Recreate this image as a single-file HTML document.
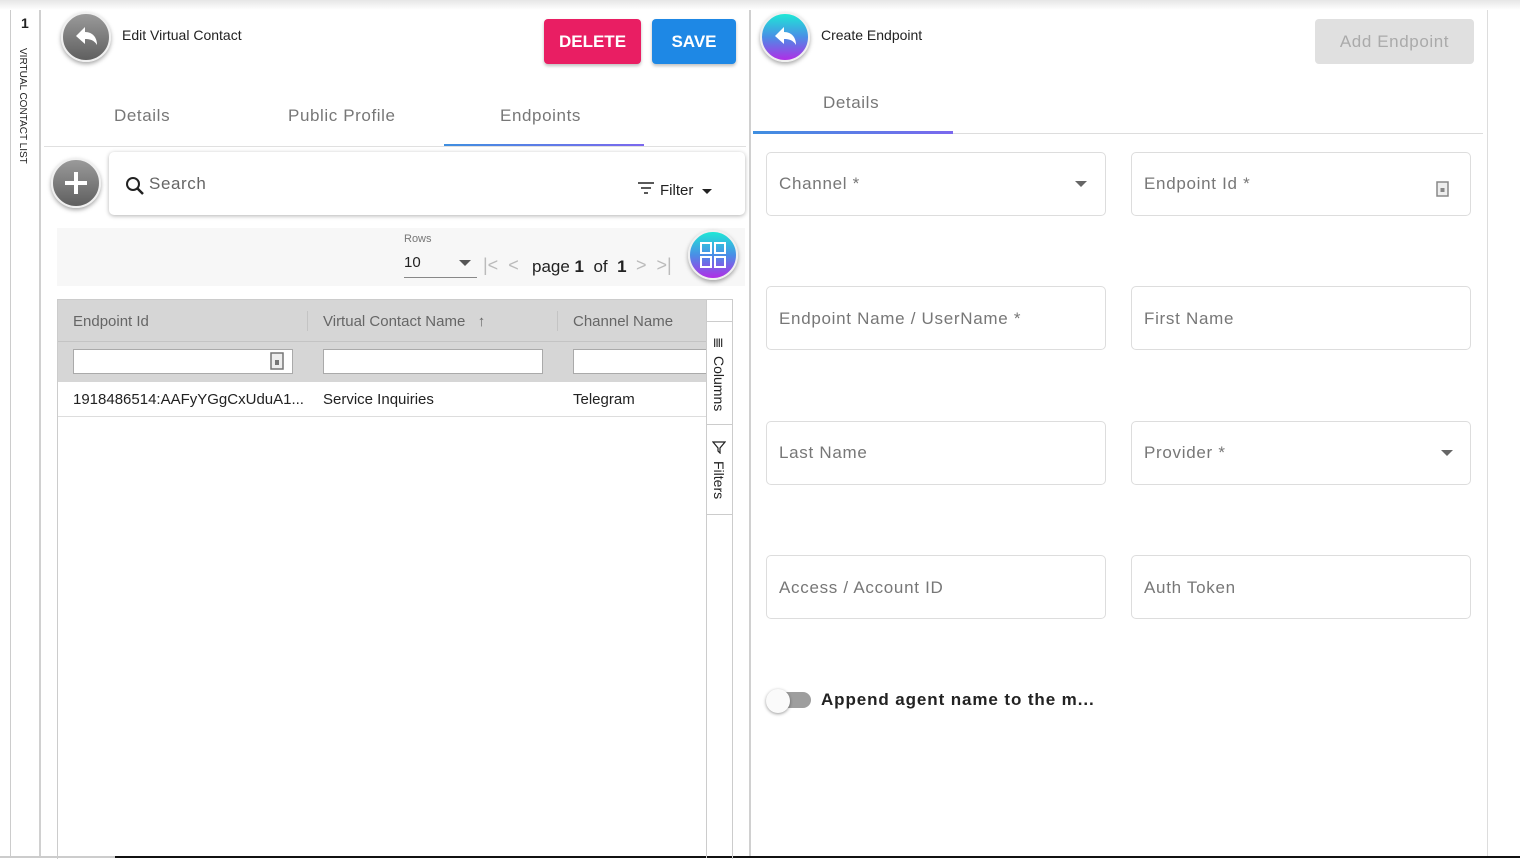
<!DOCTYPE html>
<html><head><meta charset="utf-8"><style>
*{box-sizing:border-box;margin:0;padding:0}
body{width:1520px;height:858px;overflow:hidden;background:#fff;font-family:"Liberation Sans",sans-serif;position:relative;color:#222}
.a{position:absolute}
.topsh{left:0;top:0;width:1520px;height:10px;background:linear-gradient(#e6e6e6,#fff)}
.vl{position:absolute;top:10px;bottom:0}
.circ{position:absolute;width:50px;height:50px;border-radius:50%;box-shadow:0 2px 4px rgba(0,0,0,.35);border:2px solid #f0f0f0}
.gray{background:linear-gradient(#9a9a9a,#5f5f5f)}
.grad{background:linear-gradient(#1ee8d6,#4a8ee6 50%,#b02ee6)}
.btn{position:absolute;border-radius:4px;color:#fff;font-weight:bold;font-size:17px;text-align:center;line-height:45px;box-shadow:0 2px 3px rgba(0,0,0,.25)}
.tab{position:absolute;font-size:17px;color:#777;letter-spacing:.6px}
.fld{position:absolute;width:340px;height:64px;border:1px solid #ddd;border-radius:5px;font-size:17px;color:#777;padding:21px 12px;letter-spacing:.7px}
.tri{position:absolute;width:0;height:0;border-left:6px solid transparent;border-right:6px solid transparent;border-top:6px solid #666}
.th{position:absolute;font-size:15px;color:#666;top:313px}
.fin{position:absolute;top:349px;height:25px;border:1px solid #aaa;background:#fff}
</style></head><body>
<div class="a topsh"></div>
<div class="vl" style="left:10px;width:1px;background:#ccc"></div>
<div class="vl" style="left:39px;width:2px;background:#d0d0d0"></div>
<div class="vl" style="left:749px;width:2px;background:#d0d0d0"></div>
<div class="vl" style="left:1487px;width:1px;background:#ddd"></div>
<div class="a" style="left:0;top:856px;width:115px;height:2px;background:#ccc"></div>
<div class="a" style="left:115px;top:856px;width:1405px;height:2px;background:#111"></div>
<div class="a" style="left:21px;top:15px;font-weight:bold;font-size:14px">1</div>
<div class="a" style="left:28px;top:48px;transform-origin:0 0;transform:rotate(90deg);font-size:10px;white-space:nowrap">VIRTUAL CONTACT LIST</div>

<div class="circ gray" style="left:61px;top:12px"><svg width="46" height="46" viewBox="0 0 46 46"><path d="M13 22 L22 13 V18 C30 18 34 24 34 31 C31 26 27 25 22 25 V30 Z" fill="#fff"/></svg></div>
<div class="a" style="left:122px;top:27px;font-size:14px">Edit Virtual Contact</div>
<div class="btn" style="left:544px;top:19px;width:97px;background:#e91e63">DELETE</div>
<div class="btn" style="left:652px;top:19px;width:84px;background:#1e88e5">SAVE</div>
<div class="tab" style="left:114px;top:106px">Details</div>
<div class="tab" style="left:288px;top:106px">Public Profile</div>
<div class="tab" style="left:500px;top:106px">Endpoints</div>
<div class="a" style="left:44px;top:146px;width:702px;height:1px;background:#e0e0e0"></div>
<div class="a" style="left:444px;top:144px;width:200px;height:2px;background:linear-gradient(90deg,#3f8fe0,#7b68ee)"></div>

<div class="circ gray" style="left:51px;top:158px"><svg width="46" height="46" viewBox="0 0 46 46"><path d="M23 12V34M12 23H34" stroke="#fff" stroke-width="4"/></svg></div>
<div class="a" style="left:109px;top:152px;width:636px;height:63px;border-radius:5px;box-shadow:0 1px 4px rgba(0,0,0,.3);background:#fff"></div>
<svg class="a" style="left:124px;top:175px" width="22" height="22" viewBox="0 0 22 22"><circle cx="9" cy="9" r="6" fill="none" stroke="#222" stroke-width="2"/><path d="M13 13L19 19" stroke="#222" stroke-width="2.5"/></svg>
<div class="a" style="left:149px;top:174px;font-size:17px;color:#666;letter-spacing:.6px">Search</div>
<svg class="a" style="left:637px;top:181px" width="18" height="14"><path d="M1 2H17M4 7H14M7 12H11" stroke="#222" stroke-width="1.6"/></svg>
<div class="a" style="left:660px;top:182px;font-size:15px">Filter</div>
<div class="tri" style="left:702px;top:189px;border-top-color:#222;border-width:5px 5px 0"></div>

<div class="a" style="left:57px;top:228px;width:688px;height:58px;background:#f7f7f7"></div>
<div class="a" style="left:404px;top:233px;font-size:11px;color:#777">Rows</div>
<div class="a" style="left:404px;top:254px;font-size:15px">10</div>
<div class="a" style="left:404px;top:277px;width:73px;height:1px;background:#888"></div>
<div class="tri" style="left:459px;top:260px;border-top-color:#555"></div>
<div class="a" style="left:483px;top:255px;font-size:18px;color:#bbb">|&lt;&nbsp; &lt;</div>
<div class="a" style="left:532px;top:257px;font-size:17px">page <b>1</b>&nbsp; of&nbsp; <b>1</b></div>
<div class="a" style="left:636px;top:255px;font-size:18px;color:#bbb">&gt;&nbsp; &gt;|</div>
<div class="circ grad" style="left:688px;top:230px"><svg width="46" height="46" viewBox="0 0 46 46"><g fill="none" stroke="#fff" stroke-width="2"><rect x="11" y="11" width="10" height="10"/><rect x="25" y="11" width="10" height="10"/><rect x="11" y="25" width="10" height="10"/><rect x="25" y="25" width="10" height="10"/></g></svg></div>

<div class="a" style="left:57px;top:299px;width:676px;height:560px;border:1px solid #ccc;border-bottom:none"></div>
<div class="a" style="left:58px;top:300px;width:648px;height:82px;background:#d6d6d6"></div>
<div class="a" style="left:58px;top:341px;width:648px;height:1px;background:#c4c4c4"></div>
<div class="a" style="left:307px;top:311px;width:1px;height:20px;background:#c4c4c4"></div>
<div class="a" style="left:557px;top:311px;width:1px;height:20px;background:#c4c4c4"></div>
<div class="th" style="left:73px">Endpoint Id</div>
<div class="th" style="left:323px">Virtual Contact Name&nbsp;&nbsp; ↑</div>
<div class="th" style="left:573px">Channel Name</div>
<div class="fin" style="left:73px;width:220px"></div>
<svg class="a" style="left:270px;top:352px" width="14" height="18"><rect x="1" y="1" width="12" height="16" fill="#eee" stroke="#777" stroke-width="1.5"/><rect x="5" y="8" width="4" height="5" fill="#777"/></svg>
<div class="fin" style="left:323px;width:220px"></div>
<div class="fin" style="left:573px;width:133px;border-right:none"></div>
<div class="a" style="left:73px;top:391px;font-size:15px">1918486514:AAFyYGgCxUduA1...</div>
<div class="a" style="left:323px;top:391px;font-size:15px">Service Inquiries</div>
<div class="a" style="left:573px;top:391px;font-size:15px">Telegram</div>
<div class="a" style="left:58px;top:416px;width:648px;height:1px;background:#ddd"></div>
<div class="a" style="left:706px;top:300px;width:1px;height:558px;background:#ccc"></div>
<div class="a" style="left:706px;top:321px;width:27px;height:1px;background:#ccc"></div>
<div class="a" style="left:706px;top:424px;width:27px;height:1px;background:#ccc"></div>
<div class="a" style="left:706px;top:514px;width:27px;height:1px;background:#ccc"></div>
<div class="a" style="left:713px;top:336px;font-size:12px;letter-spacing:-1px">IIII</div>
<div class="a" style="left:727px;top:356px;transform-origin:0 0;transform:rotate(90deg);font-size:14px;white-space:nowrap">Columns</div>
<svg class="a" style="left:712px;top:440px" width="14" height="14"><path d="M1 2H13L8 8V13L6 11V8Z" fill="none" stroke="#222" stroke-width="1.2"/></svg>
<div class="a" style="left:727px;top:461px;transform-origin:0 0;transform:rotate(90deg);font-size:14px;white-space:nowrap">Filters</div>

<div class="circ grad" style="left:760px;top:12px"><svg width="46" height="46" viewBox="0 0 46 46"><path d="M13 22 L22 13 V18 C30 18 34 24 34 31 C31 26 27 25 22 25 V30 Z" fill="#fff"/></svg></div>
<div class="a" style="left:821px;top:27px;font-size:14px">Create Endpoint</div>
<div class="a" style="left:1315px;top:19px;width:159px;height:45px;border-radius:4px;background:#e0e0e0;color:#aaa;font-size:17px;text-align:center;line-height:45px;letter-spacing:.6px">Add Endpoint</div>
<div class="tab" style="left:823px;top:93px">Details</div>
<div class="a" style="left:753px;top:133px;width:730px;height:1px;background:#ddd"></div>
<div class="a" style="left:753px;top:131px;width:200px;height:3px;background:linear-gradient(90deg,#3f8fe0,#7b68ee)"></div>

<div class="fld" style="left:766px;top:152px">Channel *</div>
<div class="tri" style="left:1075px;top:181px"></div>
<div class="fld" style="left:1131px;top:152px">Endpoint Id *</div>
<svg class="a" style="left:1436px;top:181px" width="13" height="16"><rect x="1" y="1" width="11" height="14" fill="#eee" stroke="#888" stroke-width="1.5"/><rect x="4.5" y="7" width="4" height="4" fill="#888"/></svg>
<div class="fld" style="left:766px;top:286px;padding-top:22px">Endpoint Name / UserName *</div>
<div class="fld" style="left:1131px;top:286px;padding-top:22px">First Name</div>
<div class="fld" style="left:766px;top:421px">Last Name</div>
<div class="fld" style="left:1131px;top:421px">Provider *</div>
<div class="tri" style="left:1441px;top:450px"></div>
<div class="fld" style="left:766px;top:555px;padding-top:22px">Access / Account ID</div>
<div class="fld" style="left:1131px;top:555px;padding-top:22px">Auth Token</div>

<div class="a" style="left:778px;top:692px;width:33px;height:16px;border-radius:8px;background:#9e9e9e"></div>
<div class="a" style="left:766px;top:689px;width:24px;height:24px;border-radius:50%;background:#fafafa;box-shadow:0 1px 3px rgba(0,0,0,.4)"></div>
<div class="a" style="left:821px;top:690px;font-size:17px;font-weight:bold;letter-spacing:.9px">Append agent name to the m...</div>
</body></html>
